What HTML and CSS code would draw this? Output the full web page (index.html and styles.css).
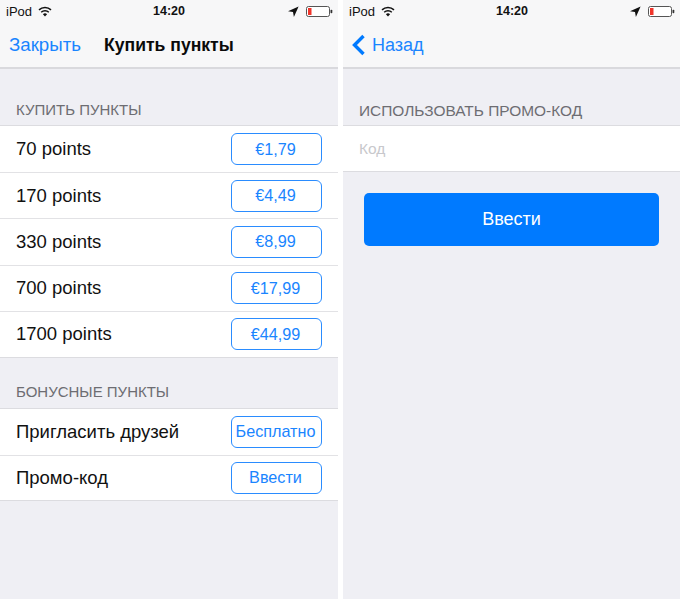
FILE: index.html
```html
<!DOCTYPE html>
<html lang="ru">
<head>
<meta charset="utf-8">
<title>Купить пункты</title>
<link rel="stylesheet" href="styles.css">
</head>
<body>
<div class="screens">
  <section class="screen screen-left">
    <header class="top">
      <div class="status">
        <div class="status-left"><span>iPod</span>
          <svg class="wifi" width="14" height="11" viewBox="0 0 14 11"><path d="M7 10.6 4.9 8.2a3 3 0 0 1 4.2 0z" fill="#111"/><path d="M3.2 6.3a5.5 5.5 0 0 1 7.6 0M1 3.9a8.6 8.6 0 0 1 12 0" fill="none" stroke="#111" stroke-width="1.5"/></svg>
        </div>
        <div class="clock">14:20</div>
        <div class="status-right">
          <svg width="11" height="11" viewBox="0 0 11 11"><path d="M10.6.4 0 5.2l5 .8.9 5z" fill="#111"/></svg>
          <svg width="27" height="11" viewBox="0 0 27 11"><rect x=".5" y=".5" width="23" height="10" rx="2" fill="#fff" stroke="#555"/><rect x="2" y="2" width="3.5" height="7" fill="#f0352b"/><rect x="24.5" y="3.8" width="1.8" height="3.4" rx=".8" fill="#333"/></svg>
        </div>
      </div>
      <nav class="nav">
        <span class="nav-link nav-close">Закрыть</span>
        <span class="nav-title">Купить пункты</span>
      </nav>
    </header>
    <h2 class="section first">КУПИТЬ ПУНКТЫ</h2>
    <ul class="group">
      <li class="row"><span>70 points</span><span class="buy">€1,79</span></li>
      <li class="row"><span>170 points</span><span class="buy">€4,49</span></li>
      <li class="row"><span>330 points</span><span class="buy">€8,99</span></li>
      <li class="row"><span>700 points</span><span class="buy">€17,99</span></li>
      <li class="row"><span>1700 points</span><span class="buy">€44,99</span></li>
    </ul>
    <h2 class="section">БОНУСНЫЕ ПУНКТЫ</h2>
    <ul class="group group-bonus">
      <li class="row"><span>Пригласить друзей</span><span class="buy">Бесплатно</span></li>
      <li class="row"><span>Промо-код</span><span class="buy">Ввести</span></li>
    </ul>
  </section>
  <section class="screen">
    <header class="top">
      <div class="status">
        <div class="status-left"><span>iPod</span>
          <svg class="wifi" width="14" height="11" viewBox="0 0 14 11"><path d="M7 10.6 4.9 8.2a3 3 0 0 1 4.2 0z" fill="#111"/><path d="M3.2 6.3a5.5 5.5 0 0 1 7.6 0M1 3.9a8.6 8.6 0 0 1 12 0" fill="none" stroke="#111" stroke-width="1.5"/></svg>
        </div>
        <div class="clock">14:20</div>
        <div class="status-right">
          <svg width="11" height="11" viewBox="0 0 11 11"><path d="M10.6.4 0 5.2l5 .8.9 5z" fill="#111"/></svg>
          <svg width="27" height="11" viewBox="0 0 27 11"><rect x=".5" y=".5" width="23" height="10" rx="2" fill="#fff" stroke="#555"/><rect x="2" y="2" width="3.5" height="7" fill="#f0352b"/><rect x="24.5" y="3.8" width="1.8" height="3.4" rx=".8" fill="#333"/></svg>
        </div>
      </div>
      <nav class="nav nav-back">
        <svg class="chevron" width="14" height="22" viewBox="0 0 14 22"><path d="M11.5 2 2.5 11l9 9" fill="none" stroke="#007aff" stroke-width="3.4"/></svg>
        <span class="nav-link">Назад</span>
      </nav>
    </header>
    <h2 class="section first wide">ИСПОЛЬЗОВАТЬ ПРОМО-КОД</h2>
    <div class="field">Код</div>
    <div class="submit">Ввести</div>
  </section>
</div>
</body>
</html>
```
FILE: styles.css
```css
* { box-sizing: border-box; }
html, body { margin: 0; padding: 0; background: #fff; }
body { font-family: "Liberation Sans", Arial, sans-serif; color: #111; }
.screens { display: flex; justify-content: space-between; width: 680px; height: 599px; overflow: hidden; }
.screen { width: 337px; height: 599px; background: #efeff4; }
.screen-left { width: 338px; }
.top { height: 69px; background: #f7f7f8; border-bottom: 2px solid #d9d9dd; }
.status { display: flex; align-items: center; justify-content: space-between; height: 23px; padding: 0 5px 0 6px; font-size: 13px; position: relative; }
.status-left { display: flex; align-items: center; gap: 6px; }
.status-right { display: flex; align-items: center; gap: 7px; }
.clock { position: absolute; left: 153px; top: 4px; font-weight: 700; font-size: 12.5px; line-height: 15px; }
.nav { display: flex; align-items: center; height: 44px; padding: 0 9px; gap: 23px; font-size: 18px; }
.nav-back { gap: 6px; }
.nav-link { color: #1a85ff; }
.nav-close { font-size: 18.7px; }
.nav-title { font-weight: 700; font-size: 17.6px; color: #0a0a0a; }
.chevron { flex: none; }
.section { margin: 0; height: 50px; padding: 24px 16px 0; font-size: 15px; line-height: 20px; font-weight: 400; color: #6d6d72; }
.section.first { height: 56px; padding-top: 31px; }
.section.wide { font-size: 15.45px; padding-top: 32px; }
.group { list-style: none; margin: 0; padding: 0; background: #fff; border-top: 1px solid #dcdce0; border-bottom: 1px solid #dcdce0; }
.row { display: flex; align-items: center; justify-content: space-between; height: 46.2px; padding: 0 16px; font-size: 18.5px; color: #111; }
.row + .row { border-top: 1px solid #e2e2e5; }
.group-bonus .row { height: 45.7px; }
.buy { display: flex; align-items: center; justify-content: center; width: 91px; height: 32px; padding-right: 2px; border: 1px solid #2a8cff; border-radius: 6px; color: #1a85ff; font-size: 16.2px; }
.field { height: 47px; padding: 0 16px; background: #fff; border-top: 1px solid #dcdce0; border-bottom: 1px solid #dcdce0; display: flex; align-items: center; font-size: 15.5px; color: #c8c8cc; }
.submit { display: flex; align-items: center; justify-content: center; width: 295px; height: 53px; margin: 21px 0 0 21px; background: #007aff; border-radius: 5px; color: #fff; font-size: 18px; }
```
